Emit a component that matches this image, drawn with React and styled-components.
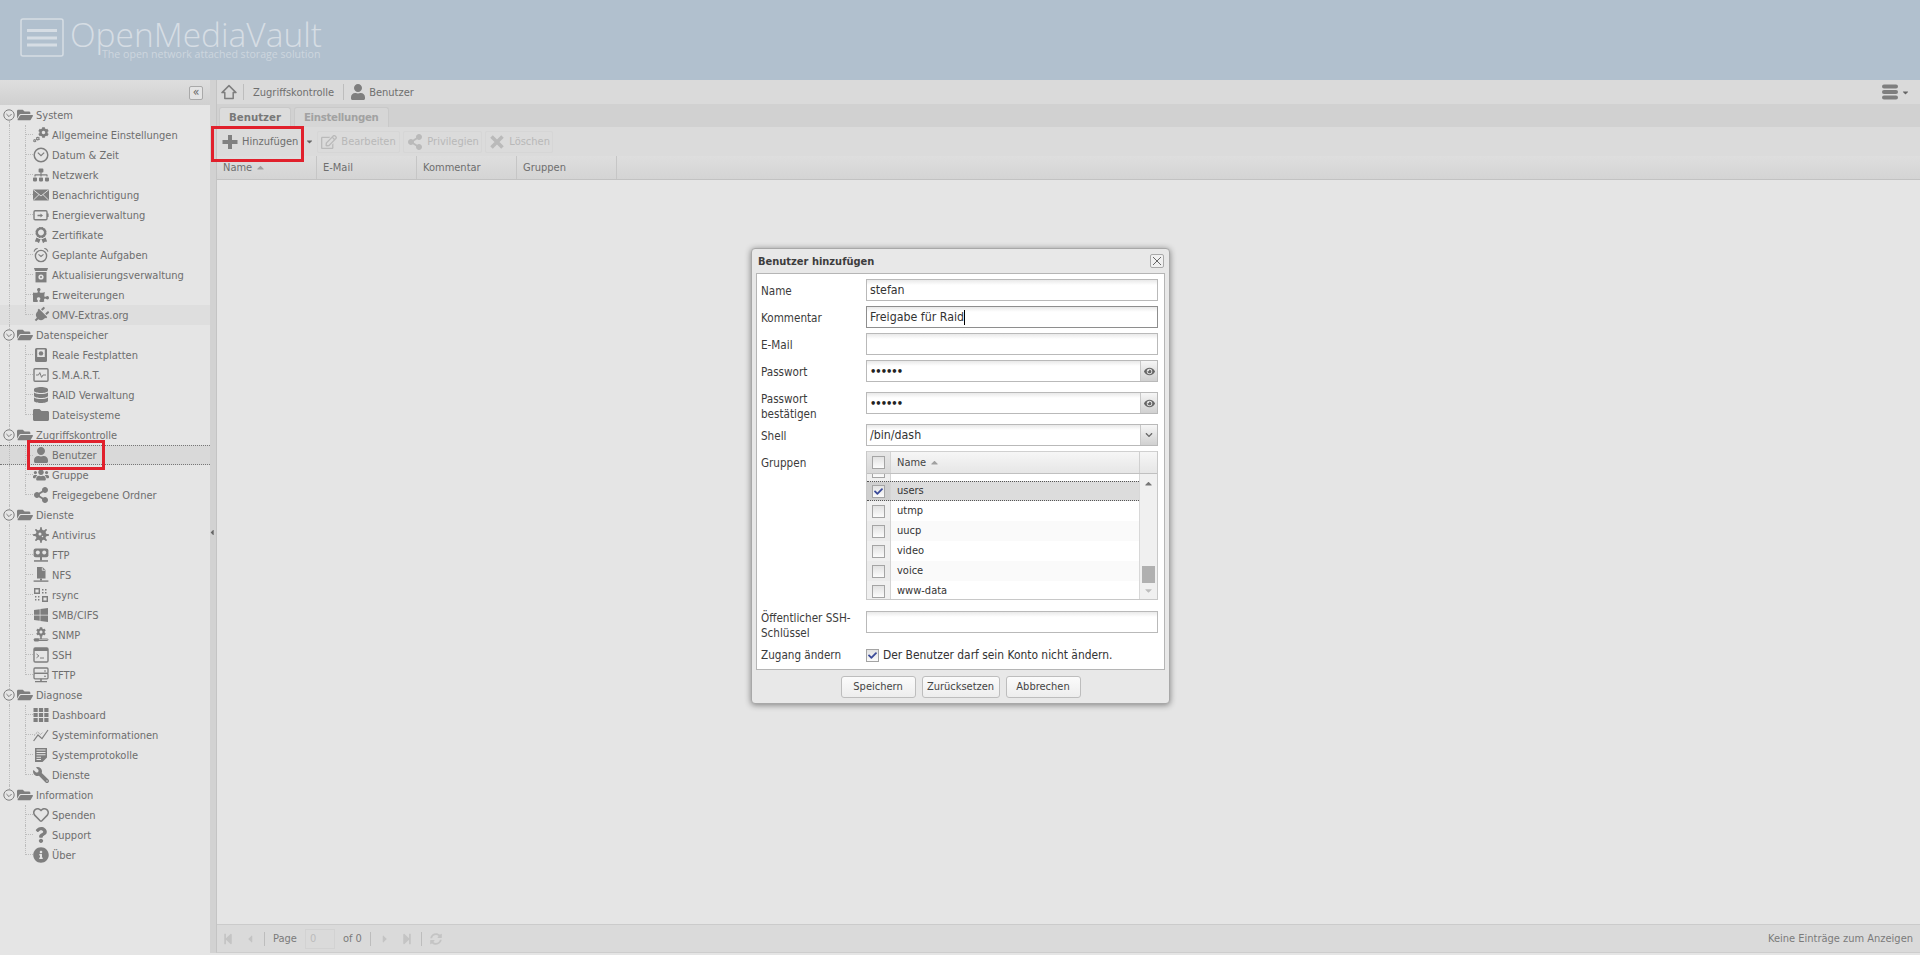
import React from "react";
import styled, { createGlobalStyle } from "styled-components";
import {
  FaCog, FaSitemap, FaAward, FaPuzzlePiece, FaPlug, FaDatabase, FaFolder,
  FaFolderOpen, FaUser, FaUsers, FaShareAlt, FaVirus, FaWindows, FaWrench, FaRegHeart, FaQuestion,
  FaInfoCircle, FaRegEdit, FaEye, FaSyncAlt, FaStepBackward, FaStepForward, FaCaretLeft,
  FaCaretRight, FaCaretUp, FaCaretDown, FaCheck, FaChevronDown,
} from "react-icons/fa";

const FONT = `"DejaVu Sans Condensed", "DejaVu Sans", "Noto Sans", sans-serif`;

const GlobalStyle = createGlobalStyle`
  html, body { margin: 0; padding: 0; height: 100%; overflow: hidden; }
  body { font-family: ${FONT}; font-stretch: condensed; font-size: 11px; background: #e5e5e5; color: #666; }
  * { box-sizing: border-box; }
`;

const Tilted = styled.span`
  display: inline-flex;
  width: 100%;
  height: 100%;
  transform: rotate(45deg);

  svg {
    width: 100%;
    height: 100%;
  }
`;

const Mirrored = styled.span`
  display: inline-flex;
  width: 100%;
  height: 100%;
  transform: scaleX(-1);

  svg {
    width: 100%;
    height: 100%;
  }
`;

/* hand drawn icons, 16x16 */
const Svg = ({ children }) => <svg viewBox="0 0 16 16" fill="currentColor">{children}</svg>;

const HomeIcon = () => (
  <Svg><path d="M8 1.6 1 8.6h2.8v5.9h8.4V8.6H15Z" fill="none" stroke="currentColor" strokeWidth="1.5" strokeLinejoin="round" /></Svg>
);
const PlusIcon = () => (
  <Svg><path d="M6 1h4v5h5.5v4H10v5H6v-5H.5V6H6Z" /></Svg>
);
const CrossIcon = () => (
  <Svg><path d="M2.5 2.5l11 11M13.5 2.5l-11 11" stroke="currentColor" strokeWidth="3.6" fill="none" /></Svg>
);
const CogsIcon = () => (
  <Svg>
    <FaCog x="5" y="0" size="11" />
    <FaCog x="2.6" y="9.4" size="4.4" />
    <FaCog x="0" y="12" size="3.6" />
  </Svg>
);
const ClockIcon = () => (
  <Svg>
    <circle cx="8" cy="8" r="6.8" fill="none" stroke="currentColor" strokeWidth="1.5" />
    <path d="M4.8 5.6 8 8.6l3.2-3" fill="none" stroke="currentColor" strokeWidth="1.2" />
  </Svg>
);
const MailIcon = () => (
  <Svg>
    <path d="M0 2.5h16v11H0Z" />
    <path d="M.2 2.7 8 9l7.8-6.3M.2 13.3 6 7.6M15.8 13.3 10 7.6" fill="none" stroke="#e5e5e5" strokeWidth=".9" />
  </Svg>
);
const BatteryIcon = () => (
  <Svg>
    <rect x="1" y="3.8" width="13" height="9" rx="1.2" fill="none" stroke="currentColor" strokeWidth="1.4" />
    <rect x="14" y="6.5" width="1.6" height="3.5" />
    <path d="M4.5 7.8h3V6.6l2.5 1.9-2.5 1.9V9.2h-3Z" />
  </Svg>
);
const DiskIcon = () => (
  <Svg>
    <path fillRule="evenodd" d="M3.5 1h9A1.5 1.5 0 0 1 14 2.5v11a1.5 1.5 0 0 1-1.5 1.5h-9A1.5 1.5 0 0 1 2 13.5v-11A1.5 1.5 0 0 1 3.5 1Zm.7 1.4v11.2h7.6V2.4Z" />
    <rect x="3" y="10" width="10" height="4" />
    <circle cx="8" cy="6.4" r="2.2" />
  </Svg>
);
const SmartIcon = () => (
  <Svg>
    <rect x="1" y="1.7" width="14" height="12.6" rx="1" fill="none" stroke="currentColor" strokeWidth="1.4" />
    <path d="M3 8h2.5l1.3-2.4L8.6 10.4 10 8h3" fill="none" stroke="currentColor" strokeWidth="1" />
  </Svg>
);
const AlarmIcon = () => (
  <Svg>
    <circle cx="8" cy="9" r="5.6" fill="none" stroke="currentColor" strokeWidth="1.4" />
    <path d="M5.5 7.4 8 9.5l2.5-2.1" fill="none" stroke="currentColor" strokeWidth="1.1" />
    <path d="M.6 4.5C1 2.6 2.4 1.2 4.4 1L5 1.7C3.2 2.2 2 3.2 1.4 5ZM15.4 4.5C15 2.6 13.6 1.2 11.6 1l-.6.7c1.8.5 3 1.5 3.6 3.3Z" />
  </Svg>
);
const UpdateIcon = () => (
  <Svg>
    <path d="M1 1h14l-1 3H2Z" />
    <path d="M2.5 5h11v10.4h-11Z" />
    <circle cx="8" cy="10" r="2.6" fill="#e5e5e5" />
    <circle cx="8" cy="10" r="1" />
  </Svg>
);
const FtpIcon = () => (
  <Svg>
    <rect x="0.6" y="1.4" width="14.8" height="8.8" rx="2" />
    <circle cx="4.8" cy="5.6" r="2" fill="#e5e5e5" />
    <circle cx="11.2" cy="5.6" r="2" fill="#e5e5e5" />
    <rect x="7" y="10" width="2" height="3.5" />
    <rect x="1" y="13.2" width="14" height="1.5" />
  </Svg>
);
const NfsIcon = () => (
  <Svg>
    <path d="M4 0h5.5L12.5 3v8.5H4Z" />
    <path d="M9.3.4v2.9h2.9" fill="none" stroke="#e5e5e5" strokeWidth=".8" />
    <rect x="7" y="11.5" width="2" height="2" />
    <rect x="0.6" y="13.4" width="14.8" height="1.4" />
  </Svg>
);
const RsyncIcon = () => (
  <Svg>
    <path fillRule="evenodd" d="M1 1h6v6H1Zm1.4 1.4v3.2h3.2V2.4Z" />
    <path fillRule="evenodd" d="M9 9h6v6H9Zm1.4 1.4v3.2h3.2v-3.2Z" />
    <path d="M9 2h1.5v1.4H9Zm3 0h1.5v1.4H12ZM9 5h1.5v1.4H9Zm3 0h1.5v1.4H12ZM2 9h1.4v1.5H2Zm3 0h1.4v1.5H5ZM2 12h1.4v1.5H2Zm3 0h1.4v1.5H5Z" />
  </Svg>
);
const SnmpIcon = () => (
  <Svg>
    <FaCog x="3" y="0" size="10" />
    <rect x="7.2" y="9.4" width="1.6" height="2.6" />
    <rect x="1" y="12" width="14" height="1.5" rx=".7" fill="none" stroke="currentColor" strokeWidth="1" />
    <rect x="1" y="11.5" width="5" height="3" rx="1" />
  </Svg>
);
const SshIcon = () => (
  <Svg>
    <rect x="1" y="1" width="14" height="14" rx="1.2" fill="none" stroke="currentColor" strokeWidth="1.4" />
    <path d="M1 1h14v3H1Z" />
    <path d="m3.5 7 2.4 1.9-2.4 1.9M7 11h4" fill="none" stroke="currentColor" strokeWidth="1" />
  </Svg>
);
const TftpIcon = () => (
  <Svg>
    <rect x="1" y="1" width="14" height="5.4" rx="1" fill="none" stroke="currentColor" strokeWidth="1.3" />
    <rect x="1" y="6.4" width="14" height="5.4" rx="1" fill="none" stroke="currentColor" strokeWidth="1.3" />
    <path d="M7.2 11.8h1.6v2.4H7.2ZM2 14h12v1.2H2Z" />
    <path d="M11 3.5h2v1h-2Zm0 5.3h2v1h-2Z" />
  </Svg>
);
const GridIcon = () => (
  <Svg>
    <path d="M.5 1h4.2v4H.5Zm5.4 0h4.2v4H5.9Zm5.4 0h4.2v4h-4.2ZM.5 6h4.2v4H.5Zm5.4 0h4.2v4H5.9Zm5.4 0h4.2v4h-4.2ZM.5 11h4.2v4H.5Zm5.4 0h4.2v4H5.9Zm5.4 0h4.2v4h-4.2Z" />
  </Svg>
);
const ChartIcon = () => (
  <Svg>
    <path d="M.6 14 5 8l4 3.6L15 3" fill="none" stroke="currentColor" strokeWidth="1.2" />
    <path d="M1 8.5 4.6 5l3 2.5 2-2" fill="none" stroke="currentColor" strokeWidth=".7" strokeDasharray="1.5 1" />
  </Svg>
);
const LogIcon = () => (
  <Svg>
    <path fillRule="evenodd" d="M2 1h12v9.5L9.5 15H2Zm1.5 1.5v1h9v-1Zm0 2.4v1h9v-1Zm0 2.4v1h9v-1Zm0 2.4v1H8v-1Zm0 2.4v1H8v-1Z" />
  </Svg>
);
const ExpandIcon = () => (
  <svg viewBox="0 0 12 12">
    <circle cx="6" cy="6" r="5.2" fill="none" stroke="currentColor" strokeWidth="1" />
    <path d="M3.4 5 6 7.6 8.6 5" fill="none" stroke="currentColor" strokeWidth="1" />
  </svg>
);
const MenuIcon = () => (
  <svg viewBox="0 0 16 15" fill="currentColor">
    <rect y="0" width="16" height="4" rx="2" />
    <rect y="5.5" width="16" height="4" rx="2" />
    <rect y="11" width="16" height="4" rx="2" />
  </svg>
);
const CloseIcon = () => (
  <svg viewBox="0 0 10 10" width="10" height="10">
    <path d="m1 1 8 8M9 1 1 9" stroke="currentColor" strokeWidth="1" fill="none" />
  </svg>
);
const LogoMark = () => (
  <svg width="44" height="39" viewBox="0 0 44 39" fill="none" stroke="#d6dde4">
    <rect x="1" y="1" width="42" height="37" rx="2" strokeWidth="1.5" />
    <path d="M7 12.5h30M7 20h30M7 27h30" strokeWidth="3" />
  </svg>
);

const NAV = [
  { title: "System", items: [
    ["Allgemeine Einstellungen", <CogsIcon />],
    ["Datum & Zeit", <ClockIcon />],
    ["Netzwerk", <FaSitemap />],
    ["Benachrichtigung", <MailIcon />],
    ["Energieverwaltung", <BatteryIcon />],
    ["Zertifikate", <FaAward />],
    ["Geplante Aufgaben", <AlarmIcon />],
    ["Aktualisierungsverwaltung", <UpdateIcon />],
    ["Erweiterungen", <FaPuzzlePiece />],
    ["OMV-Extras.org", <Tilted><FaPlug /></Tilted>, "hover"],
  ] },
  { title: "Datenspeicher", items: [
    ["Reale Festplatten", <DiskIcon />],
    ["S.M.A.R.T.", <SmartIcon />],
    ["RAID Verwaltung", <FaDatabase />],
    ["Dateisysteme", <FaFolder />],
  ] },
  { title: "Zugriffskontrolle", items: [
    ["Benutzer", <FaUser />, "selected"],
    ["Gruppe", <FaUsers />],
    ["Freigegebene Ordner", <FaShareAlt />],
  ] },
  { title: "Dienste", items: [
    ["Antivirus", <FaVirus />],
    ["FTP", <FtpIcon />],
    ["NFS", <NfsIcon />],
    ["rsync", <RsyncIcon />],
    ["SMB/CIFS", <FaWindows />],
    ["SNMP", <SnmpIcon />],
    ["SSH", <SshIcon />],
    ["TFTP", <TftpIcon />],
  ] },
  { title: "Diagnose", items: [
    ["Dashboard", <GridIcon />],
    ["Systeminformationen", <ChartIcon />],
    ["Systemprotokolle", <LogIcon />],
    ["Dienste", <Mirrored><FaWrench /></Mirrored>],
  ] },
  { title: "Information", items: [
    ["Spenden", <FaRegHeart />],
    ["Support", <FaQuestion />],
    ["Über", <FaInfoCircle />],
  ] },
];

const GROUPS = ["utmp", "uucp", "video", "voice", "www-data"];

const App = () => (
  <Page>
    <GlobalStyle />
    <Banner>
      <LogoMark />
      <LogoText>
        <LogoName>OpenMediaVault</LogoName>
        <LogoTag>The open network attached storage solution</LogoTag>
      </LogoText>
    </Banner>
    <Main>
      <Sidebar>
        <SidebarHead><CollapseButton>«</CollapseButton></SidebarHead>
        <Tree>
          {NAV.map((group, g) => (
            <React.Fragment key={group.title}>
              <GroupRow $first={g === 0} $last={g === NAV.length - 1}>
                <Expander><ExpandIcon /></Expander>
                <Glyph $size={16}><FaFolderOpen /></Glyph>
                {group.title}
              </GroupRow>
              {group.items.map(([label, icon, state], i) => (
                <LeafRow
                  key={label}
                  $state={state}
                  $trunk={g !== NAV.length - 1}
                  $end={i === group.items.length - 1}
                >
                  <Glyph $size={16}>{icon}</Glyph>
                  {label}
                </LeafRow>
              ))}
            </React.Fragment>
          ))}
        </Tree>
      </Sidebar>
      <Splitter><SplitHandle><FaCaretLeft /></SplitHandle></Splitter>
      <Content>
        <Breadcrumb>
          <Glyph $size={16}><HomeIcon /></Glyph>
          <CrumbSep />
          <CrumbText>Zugriffskontrolle</CrumbText>
          <CrumbSep />
          <Glyph $size={16}><FaUser /></Glyph>
          <CrumbText>Benutzer</CrumbText>
          <MenuButton>
            <Glyph $size={16}><MenuIcon /></Glyph>
            <SmallCaret><FaCaretDown /></SmallCaret>
          </MenuButton>
        </Breadcrumb>
        <TabBar>
          <Tab $active>Benutzer</Tab>
          <Tab>Einstellungen</Tab>
        </TabBar>
        <Toolbar>
          <ToolButton>
            <Glyph $size={16}><PlusIcon /></Glyph>
            Hinzufügen
          </ToolButton>
          <SmallCaret><FaCaretDown /></SmallCaret>
          <ToolButton $disabled $width={83}>
            <Glyph $size={16}><FaRegEdit /></Glyph>
            Bearbeiten
          </ToolButton>
          <ToolButton $disabled $width={79}>
            <Glyph $size={16}><FaShareAlt /></Glyph>
            Privilegien
          </ToolButton>
          <ToolButton $disabled $width={68}>
            <Glyph $size={16}><CrossIcon /></Glyph>
            Löschen
          </ToolButton>
        </Toolbar>
        <GridHead>
          <HeadCell>Name <SortCaret><FaCaretUp /></SortCaret></HeadCell>
          <HeadCell>E-Mail</HeadCell>
          <HeadCell>Kommentar</HeadCell>
          <HeadCell>Gruppen</HeadCell>
        </GridHead>
        <GridEmpty />
        <Pager>
          <PagerIcon><FaStepBackward /></PagerIcon>
          <PagerIcon><FaCaretLeft /></PagerIcon>
          <PagerSep />
          <PagerLabel>Page</PagerLabel>
          <PagerInput>0</PagerInput>
          <PagerLabel>of 0</PagerLabel>
          <PagerSep />
          <PagerIcon><FaCaretRight /></PagerIcon>
          <PagerIcon><FaStepForward /></PagerIcon>
          <PagerSep />
          <PagerIcon><FaSyncAlt /></PagerIcon>
          <PagerInfo>Keine Einträge zum Anzeigen</PagerInfo>
        </Pager>
      </Content>
    </Main>

    <Dialog>
      <DialogTitle>
        Benutzer hinzufügen
        <CloseButton><CloseIcon /></CloseButton>
      </DialogTitle>
      <DialogBody>
        <FormRow>
          <FieldLabel>Name</FieldLabel>
          <Field>stefan</Field>
        </FormRow>
        <FormRow>
          <FieldLabel>Kommentar</FieldLabel>
          <Field $focus>Freigabe für Raid<Caret /></Field>
        </FormRow>
        <FormRow>
          <FieldLabel>E-Mail</FieldLabel>
          <Field />
        </FormRow>
        <FormRow $gap={10}>
          <FieldLabel>Passwort</FieldLabel>
          <Field><Dots>••••••</Dots><FieldTrigger><FaEye /></FieldTrigger></Field>
        </FormRow>
        <FormRow $gap={0} $height={32}>
          <FieldLabel $multi>Passwort bestätigen</FieldLabel>
          <Field><Dots>••••••</Dots><FieldTrigger><FaEye /></FieldTrigger></Field>
        </FormRow>
        <FormRow>
          <FieldLabel>Shell</FieldLabel>
          <Field>/bin/dash<FieldTrigger $small><FaChevronDown /></FieldTrigger></Field>
        </FormRow>
        <FormRow $gap={11}>
          <FieldLabel>Gruppen</FieldLabel>
          <GroupGrid>
            <GroupHead>
              <CheckCell><CheckBox /></CheckCell>
              <GroupHeadName>Name <SortCaret><FaCaretUp /></SortCaret></GroupHeadName>
              <ScrollCorner />
            </GroupHead>
            <GroupBodyWrap>
              <GroupRows>
                <GroupItem $clip><CheckCell><CheckBox /></CheckCell></GroupItem>
                <GroupItem $selected>
                  <CheckCell><CheckBox $checked><FaCheck /></CheckBox></CheckCell>
                  <GroupName $dense>users</GroupName>
                </GroupItem>
                {GROUPS.map((name, i) => (
                  <GroupItem key={name} $alt={i % 2 === 1}>
                    <CheckCell><CheckBox /></CheckCell>
                    <GroupName>{name}</GroupName>
                  </GroupItem>
                ))}
              </GroupRows>
              <ScrollTrack>
                <ScrollArrow><FaCaretUp /></ScrollArrow>
                <ScrollThumb />
                <ScrollArrow $faded><FaCaretDown /></ScrollArrow>
              </ScrollTrack>
            </GroupBodyWrap>
          </GroupGrid>
        </FormRow>
        <FormRow $gap={3} $height={30}>
          <FieldLabel $multi>Öffentlicher SSH-Schlüssel</FieldLabel>
          <Field />
        </FormRow>
        <FormRow $gap={0}>
          <FieldLabel $top={4}>Zugang ändern</FieldLabel>
          <CheckLine>
            <CheckBox $checked><FaCheck /></CheckBox>
            Der Benutzer darf sein Konto nicht ändern.
          </CheckLine>
        </FormRow>
      </DialogBody>
      <DialogFooter>
        <FootButton>Speichern</FootButton>
        <FootButton $width={78}>Zurücksetzen</FootButton>
        <FootButton>Abbrechen</FootButton>
      </DialogFooter>
    </Dialog>

    <Callout $left={211} $top={126} $width={93} $height={36} />
    <Callout $left={27} $top={440} $width={78} $height={30} />
  </Page>
);

export default App;

/* ---------------- Styled Components ---------------- */
const Page = styled.div`
  position: relative;
  display: flex;
  flex-direction: column;
  height: 100vh;
  overflow: hidden;
`;

const Banner = styled.header`
  display: flex;
  align-items: flex-start;
  gap: 6px;
  height: 80px;
  flex: none;
  padding: 18px 0 0 20px;
  background: #b1c0ce;
`;

const LogoText = styled.div`
  display: flex;
  flex-direction: column;
  margin-top: 1px;
`;

const LogoName = styled.div`
  font-family: "Open Sans", sans-serif;
  font-stretch: normal;
  font-weight: 300;
  font-size: 33.5px;
  line-height: 30px;
  color: #d6dde4;
`;

const LogoTag = styled.div`
  font-family: "Open Sans", sans-serif;
  font-stretch: normal;
  font-size: 10.6px;
  line-height: 11px;
  margin-left: 32px;
  color: #cdd6de;
`;

const Main = styled.div`
  display: flex;
  flex: 1;
  min-height: 0;
  padding-bottom: 2px;
`;

const Sidebar = styled.aside`
  width: 210px;
  flex: none;
  display: flex;
  flex-direction: column;
  background: #e5e5e5;
`;

const SidebarHead = styled.div`
  height: 25px;
  flex: none;
  display: flex;
  justify-content: flex-end;
  align-items: center;
  padding-right: 7px;
  background: linear-gradient(#dedede, #d0d0d0);
`;

const CollapseButton = styled.div`
  width: 14px;
  height: 14px;
  border: 1px solid #a9a9a9;
  border-radius: 2px;
  background: #e4e4e4;
  color: #666;
  font-size: 12px;
  line-height: 10px;
  text-align: center;
`;

const Tree = styled.div`
  padding-top: 0;
`;

const Glyph = styled.span`
  display: inline-flex;
  flex: none;
  width: ${(p) => p.$size}px;
  height: ${(p) => p.$size}px;
  color: #7e7e7e;

  > svg {
    width: 100%;
    height: 100%;
  }
`;

const GroupRow = styled.div`
  position: relative;
  display: flex;
  align-items: center;
  height: 20px;
  padding-left: 3px;
  color: #6e6e6e;

  &::before {
    content: "";
    position: absolute;
    left: 9px;
    top: ${(p) => (p.$first ? "16px" : "0")};
    bottom: ${(p) => (p.$last ? "16px" : "0")};
    border-left: 1px dotted #bcbcbc;
  }

  ${Glyph} {
    margin: 0 3px 0 2px;
  }
`;

const Expander = styled.span`
  position: relative;
  z-index: 1;
  display: inline-flex;
  width: 12px;
  height: 12px;
  color: #7e7e7e;
  background: #e5e5e5;
  border-radius: 50%;
`;

const LeafRow = styled.div`
  position: relative;
  display: flex;
  align-items: center;
  gap: 3px;
  height: 20px;
  padding-left: 33px;
  color: #6e6e6e;
  background: ${(p) => (p.$state === "selected" ? "#d9d9d9" : p.$state === "hover" ? "#dedede" : "none")};
  border-top: ${(p) => (p.$state === "selected" ? "1px dotted #777" : "none")};
  border-bottom: ${(p) => (p.$state === "selected" ? "1px dotted #777" : "none")};

  &::before {
    content: "";
    position: absolute;
    left: 9px;
    top: 0;
    bottom: 0;
    border-left: ${(p) => (p.$trunk ? "1px dotted #bcbcbc" : "none")};
  }

  &::after {
    content: "";
    position: absolute;
    left: 25px;
    width: 8px;
    top: 0;
    height: ${(p) => (p.$end ? "10px" : "100%")};
    border-left: 1px dotted #bcbcbc;
    background: linear-gradient(90deg, #bcbcbc 50%, transparent 50%) 0 9px / 2px 1px repeat-x;
  }
`;

const Splitter = styled.div`
  width: 6px;
  flex: none;
  display: flex;
  align-items: center;
  justify-content: center;
  padding-top: 32px;
  background: #d2d2d2;
`;

const SplitHandle = styled.div`
  width: 6px;
  height: 30px;
  display: flex;
  align-items: center;
  color: #666;
  font-size: 9px;

  svg {
    margin-left: -2px;
  }
`;

const Content = styled.main`
  flex: 1;
  min-width: 0;
  display: flex;
  flex-direction: column;
  border-left: 1px solid #c4c4c4;
  border-bottom: 1px solid #cdcdcd;
`;

const Breadcrumb = styled.nav`
  display: flex;
  align-items: center;
  height: 24px;
  flex: none;
  padding: 0 10px 0 4px;
  background: #dadada;
  color: #6f6f6f;
`;

const CrumbSep = styled.span`
  width: 1px;
  height: 16px;
  margin: 0 6px;
  background: #bdbdbd;
`;

const CrumbText = styled.span`
  margin: 0 3px;
`;

const MenuButton = styled.div`
  margin-left: auto;
  display: flex;
  align-items: center;
  gap: 3px;
`;

const SmallCaret = styled.span`
  display: inline-flex;
  font-size: 9px;
  color: #666;
`;

const TabBar = styled.div`
  display: flex;
  align-items: flex-end;
  gap: 3px;
  height: 23px;
  flex: none;
  padding-left: 2px;
  background: #d1d1d1;
`;

const Tab = styled.div`
  height: 20px;
  padding: 0 9px;
  display: flex;
  align-items: center;
  border: 1px solid #c9c9c9;
  border-bottom: none;
  border-radius: 3px 3px 0 0;
  font-family: "DejaVu Sans", sans-serif;
  font-stretch: normal;
  font-size: 10.2px;
  font-weight: 700;
  letter-spacing: ${(p) => (p.$active ? "0" : "-0.3px")};
  background: ${(p) => (p.$active ? "#dcdcdc" : "#d6d6d6")};
  color: ${(p) => (p.$active ? "#787878" : "#a2a2a2")};
`;

const Toolbar = styled.div`
  display: flex;
  align-items: center;
  gap: 3px;
  height: 29px;
  flex: none;
  padding-left: 1px;
  background: #dbdbdb;
`;

const ToolButton = styled.div`
  display: flex;
  align-items: center;
  gap: 4px;
  height: 22px;
  width: ${(p) => (p.$width ? `${p.$width}px` : "auto")};
  padding: 0 3px;
  border: 1px solid ${(p) => (p.$disabled ? "#d6d6d6" : "transparent")};
  border-radius: 2px;
  color: ${(p) => (p.$disabled ? "#b8b8b8" : "#6e6e6e")};

  ${Glyph} {
    color: ${(p) => (p.$disabled ? "#bababa" : "#808080")};
  }
`;

const GridHead = styled.div`
  display: flex;
  height: 24px;
  flex: none;
  background: linear-gradient(#dedede, #d4d4d4);
  border-bottom: 1px solid #c2c2c2;
  color: #6e6e6e;
`;

const HeadCell = styled.div`
  width: 100px;
  display: flex;
  align-items: center;
  gap: 3px;
  padding-left: 6px;
  border-right: 1px solid #c6c6c6;
`;

const SortCaret = styled.span`
  display: inline-flex;
  font-size: 11px;
  color: #a0a0a0;
`;

const GridEmpty = styled.div`
  flex: 1;
  background: #e5e5e5;
`;

const Pager = styled.footer`
  display: flex;
  align-items: center;
  height: 28px;
  flex: none;
  padding: 0 7px 0 0;
  background: #dadada;
  border-top: 1px solid #cbcbcb;
  color: #7a7a7a;
`;

const PagerIcon = styled.span`
  width: 22px;
  height: 22px;
  display: flex;
  align-items: center;
  justify-content: center;
  color: #c4c4c4;
  font-size: 12px;
`;

const PagerSep = styled.span`
  width: 1px;
  height: 14px;
  margin: 0 3px;
  background: #bdbdbd;
`;

const PagerLabel = styled.span`
  margin: 0 5px;
`;

const PagerInput = styled.div`
  width: 30px;
  height: 20px;
  padding-left: 4px;
  line-height: 18px;
  margin: 0 3px;
  border: 1px solid #d2d2d2;
  color: #bcbcbc;
`;

const PagerInfo = styled.span`
  margin-left: auto;
`;

const Dialog = styled.section`
  position: absolute;
  left: 751px;
  top: 248px;
  width: 419px;
  height: 456px;
  display: flex;
  flex-direction: column;
  padding: 0 4px;
  background: #e8e8e8;
  border: 1px solid #a8a8a8;
  border-radius: 4px;
  box-shadow: 0 1px 6px rgba(0, 0, 0, 0.45);
  color: #333;
`;

const DialogTitle = styled.div`
  display: flex;
  align-items: center;
  justify-content: space-between;
  height: 24px;
  flex: none;
  font-weight: 700;
  font-size: 11px;
  color: #3d3d3d;
  padding: 0 1px 0 2px;
`;

const CloseButton = styled.div`
  width: 14px;
  height: 14px;
  display: flex;
  align-items: center;
  justify-content: center;
  border: 1px solid #aaa;
  border-radius: 2px;
  background: #f0f0f0;
  color: #666;
`;

const DialogBody = styled.div`
  height: 397px;
  flex: none;
  padding: 5px 6px 0 4px;
  background: #fff;
  border: 1px solid #b5b5b5;
`;

const FormRow = styled.div`
  display: grid;
  grid-template-columns: 105px 1fr;
  align-items: start;
  height: ${(p) => (p.$height ? `${p.$height}px` : "auto")};
  margin-bottom: ${(p) => (p.$gap === undefined ? 5 : p.$gap)}px;
`;

const FieldLabel = styled.label`
  font-size: 11.6px;
  line-height: ${(p) => (p.$multi ? "15px" : "14px")};
  padding-top: ${(p) => (p.$multi ? 0 : p.$top || 5)}px;
  padding-right: 10px;
  color: #3b3b3b;
`;

const Field = styled.div`
  position: relative;
  display: flex;
  align-items: center;
  height: 22px;
  padding-left: 3px;
  font-size: 12.3px;
  color: #333;
  background: linear-gradient(#e9e9e9, #fff 5px);
  border: 1px solid ${(p) => (p.$focus ? "#8e8e8e" : "#b9b9b9")};
`;

const Dots = styled.span`
  font-size: 11px;
  font-weight: 700;
  letter-spacing: -1px;
  color: #222;
`;

const Caret = styled.span`
  width: 1px;
  height: 15px;
  background: #000;
`;

const FieldTrigger = styled.span`
  position: absolute;
  right: 0;
  top: 0;
  bottom: 0;
  width: 17px;
  display: flex;
  align-items: center;
  justify-content: center;
  border-left: 1px solid #c8c8c8;
  background: linear-gradient(#f6f6f6, #d0d0d0);
  color: #666;
  font-size: ${(p) => (p.$small ? "8px" : "11px")};
`;

const GroupGrid = styled.div`
  height: 149px;
  display: flex;
  flex-direction: column;
  border-bottom: 1px solid #c8c8c8;
  border-left: 1px solid #c8c8c8;
  border-right: 1px solid #c8c8c8;
`;

const GroupHead = styled.div`
  display: flex;
  height: 23px;
  flex: none;
  background: linear-gradient(#f6f6f6, #e6e6e6);
  border-top: 1px solid #d0d0d0;
  border-bottom: 1px solid #c0c0c0;
  color: #444;
`;

const CheckCell = styled.div`
  width: 24px;
  flex: none;
  display: flex;
  align-items: center;
  justify-content: center;
  border-right: 1px solid #d4d4d4;
  background: rgba(0, 0, 0, 0.06);
`;

const GroupHeadName = styled.div`
  flex: 1;
  display: flex;
  align-items: center;
  gap: 3px;
  padding-left: 6px;
`;

const ScrollCorner = styled.div`
  width: 18px;
  border-left: 1px solid #d0d0d0;
`;

const GroupBodyWrap = styled.div`
  flex: 1;
  display: flex;
  min-height: 0;
`;

const GroupRows = styled.div`
  flex: 1;
  overflow: hidden;
`;

const GroupItem = styled.div`
  display: flex;
  height: 20px;
  flex: none;
  margin-top: ${(p) => (p.$clip ? "-13px" : "0")};
  color: #333;
  background: ${(p) => (p.$selected ? "#dcdcdc" : p.$alt ? "#fafafa" : "#fff")};
  border-top: ${(p) => (p.$selected ? "1px dotted #555" : "none")};
  border-bottom: ${(p) => (p.$selected ? "1px dotted #555" : "none")};
`;

const GroupName = styled.div`
  padding-left: 6px;
  line-height: ${(p) => (p.$dense ? "17px" : "19px")};
`;

const CheckBox = styled.span`
  width: 13px;
  height: 13px;
  flex: none;
  display: inline-flex;
  align-items: center;
  justify-content: center;
  border: 1px solid #a4a4a4;
  background: linear-gradient(#e2e2e2, #fbfbfb);
  color: #3a4a99;
  font-size: 9px;
`;

const ScrollTrack = styled.div`
  width: 18px;
  flex: none;
  display: flex;
  flex-direction: column;
  align-items: center;
  padding: 4px 0 3px;
  background: #f0f0f0;
  border-left: 1px solid #d8d8d8;
`;

const ScrollArrow = styled.span`
  display: inline-flex;
  color: ${(p) => (p.$faded ? "#bdbdbd" : "#777")};
  font-size: 11px;
`;

const ScrollThumb = styled.div`
  width: 13px;
  height: 17px;
  margin-top: auto;
  margin-bottom: 2px;
  background: #b0b0b0;
`;

const CheckLine = styled.div`
  display: flex;
  align-items: center;
  gap: 4px;
  height: 22px;
  font-size: 11.9px;
  color: #333;
`;

const DialogFooter = styled.div`
  flex: 1;
  display: flex;
  justify-content: center;
  align-items: center;
  gap: 6px;
`;

const FootButton = styled.div`
  width: ${(p) => p.$width || 75}px;
  height: 22px;
  display: flex;
  align-items: center;
  justify-content: center;
  border: 1px solid #bdbdbd;
  border-radius: 3px;
  background: linear-gradient(#fbfbfb, #ededed);
  color: #444;
`;

const Callout = styled.div`
  position: absolute;
  left: ${(p) => p.$left}px;
  top: ${(p) => p.$top}px;
  width: ${(p) => p.$width}px;
  height: ${(p) => p.$height}px;
  border: 3px solid #e1202c;
  pointer-events: none;
`;
